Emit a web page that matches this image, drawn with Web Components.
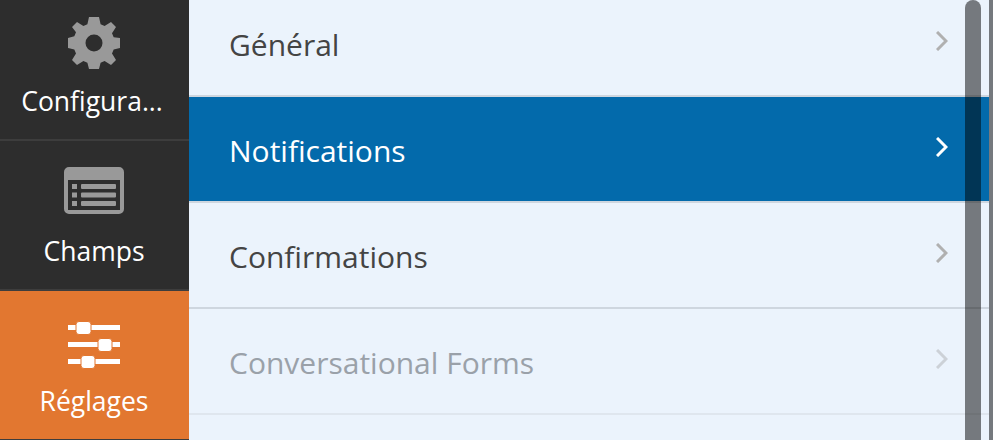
<!DOCTYPE html>
<html>
<head>
<meta charset="utf-8">
<style>
  html, body { margin: 0; height: 100%; overflow: hidden; }
  body { font-family: "Open Sans", "Noto Sans", sans-serif; }
</style>
</head>
<body>
<settings-page>
  <side-tab slot="side" label="Configura..." style="--top:26px;--shift:-5px">
    <svg slot="icon" width="52" height="52" viewBox="0 0 52 52"><path fill="#999" fill-rule="evenodd" d="M21 0h10l1.600 7.200 4 1.700L43 5l5 5-4 6.300 1.700 4L52 21v10l-6.300 1.600-1.700 4L48 43l-5 5-6.400-4-4 1.700L31 52H21l-1.600-6.300-4-1.700L9 48l-5-5 4-6.400-1.700-4L0 31V21l6.300-1.700 1.700-4L4 10l5-5 6.400 3.900 4-1.700zM26 17.500a8.500 8.500 0 1 0 0 17 8.500 8.500 0 0 0 0-17z"/></svg>
  </side-tab>
  <side-tab slot="side" label="Champs" style="--top:26px">
    <svg slot="icon" width="60" height="47" viewBox="0 0 60 47"><path fill="#999" fill-rule="evenodd" d="M5 0h50a5 5 0 0 1 5 5v37a5 5 0 0 1-5 5H5a5 5 0 0 1-5-5V5a5 5 0 0 1 5-5zM4 13v30h52V13z"/><path fill="#999" d="M8 17h5v5H8zM8 25.500h5v5H8zM8 34h5v5H8z"/><rect x="17" y="17" width="35" height="5" rx="1" fill="#999"/><rect x="17" y="25.500" width="35" height="5" rx="1" fill="#999"/><rect x="17" y="34" width="35" height="5" rx="1" fill="#999"/></svg>
  </side-tab>
  <side-tab slot="side" label="Réglages" active style="--top:30px">
    <svg slot="icon" width="52" height="48" viewBox="0 0 52 48"><path fill="#fff" d="M0 4h52v5H0zM0 21h52v5H0zM0 38h52v5H0z"/><rect x="8" y="0.500" width="15" height="13" rx="3" fill="#fff" stroke="#e27730"/><rect x="30" y="17.500" width="14" height="13" rx="3" fill="#fff" stroke="#e27730"/><rect x="13" y="34.500" width="14" height="13" rx="3" fill="#fff" stroke="#e27730"/></svg>
  </side-tab>
  <panel-row label="Général"></panel-row>
  <panel-row label="Notifications" active></panel-row>
  <panel-row label="Confirmations"></panel-row>
  <panel-row label="Conversational Forms" faded></panel-row>
</settings-page>
<script>
class SettingsPage extends HTMLElement {
  constructor() {
    super();
    const shadow = this.attachShadow({mode:'open'});
    shadow.innerHTML = `
      <style>
        :host { display: flex; width: 993px; height: 440px; overflow: hidden; position: relative; background: #ebf3fc; }
        .side { width: 189px; flex: none; display: flex; flex-direction: column; margin-top: -9px; background: #2d2d2d; }
        .rows { flex: 1; display: flex; flex-direction: column; margin-top: -9px; }
        .thumb { position: absolute; left: 965px; top: 0; bottom: 0; width: 16px; border-radius: 8px 8px 0 0; background: rgba(0,0,0,.5); }
        .edge { position: absolute; left: 989px; top: 0; bottom: 0; width: 4px; background: #75797e; }
      </style>
      <div class="side"><slot name="side"></slot></div>
      <div class="rows"><slot></slot></div>
      <div class="thumb"></div>
      <div class="edge"></div>`;
  }
}
class SideTab extends HTMLElement {
  constructor() {
    super();
    const shadow = this.attachShadow({mode:'open'});
    shadow.innerHTML = `
      <style>
        :host { display: block; height: 150px; flex: none; box-sizing: border-box; border-bottom: 2px solid #3d3d3d; color: #fff; font-size: 26.500px; text-align: center; }
        :host([active]) { background: #e27730; }
        .icon { height: 92px; box-sizing: border-box; padding: var(--top) 1px 0 0; display: flex; justify-content: center; align-items: flex-start; }
        .label { line-height: 36px; margin-left: var(--shift, -1px); }
      </style>
      <div class="icon"><slot name="icon"></slot></div>
      <div class="label"></div>`;
    shadow.querySelector('.label').textContent = this.getAttribute('label');
  }
}
class PanelRow extends HTMLElement {
  constructor() {
    super();
    const shadow = this.attachShadow({mode:'open'});
    shadow.innerHTML = `
      <style>
        :host { display: flex; align-items: center; flex: none; box-sizing: border-box; height: 106px; padding: 2px 40px 0; border-bottom: 2px solid #ced6df; color: #444; font-size: 30px; position: relative; }
        :host([active]) { background: #036aab; color: #fff; }
        :host([faded]) { color: #9aa1a9; border-bottom-color: #dfe6ee; }
        .label { flex: 1; }
        svg { position: absolute; left: 747px; top: 40px; }
        path { fill: none; stroke: #b0b0b0; stroke-width: 3; }
        :host([active]) path { stroke: #fff; }
        :host([faded]) path { stroke: #ccd1d7; }
      </style>
      <div class="label"></div>
      <svg width="12" height="20" viewBox="0 0 12 20"><path d="M1 1l9 9-9 9"/></svg>`;
    shadow.querySelector('.label').textContent = this.getAttribute('label');
  }
}
customElements.define('settings-page', SettingsPage);
customElements.define('side-tab', SideTab);
customElements.define('panel-row', PanelRow);
</script>
</body>
</html>
